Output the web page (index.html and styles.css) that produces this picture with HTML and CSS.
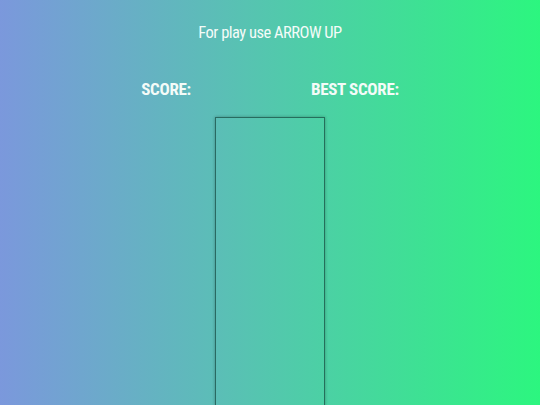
FILE: index.html
```html
<!DOCTYPE html>
<html lang="en">
<head>
  <meta charset="utf-8">
  <title>Jump</title>
  <meta name="viewport" content="width=device-width, initial-scale=1">
  <link rel="stylesheet" href="styles.css">
</head>
<body>
  <p class="hint">For play use ARROW UP</p>
  <div class="scores">
    <div class="score">SCORE: <span id="score"></span></div>
    <div class="score">BEST SCORE: <span id="best"></span></div>
  </div>
  <div class="game"></div>
</body>
</html>
```

FILE: styles.css
```css
body {
  margin: 0;
  height: 405px;
  overflow: hidden;
  font-family: "Liberation Sans Narrow", "Roboto Condensed", "Liberation Sans", sans-serif;
  color: #f4fbf8;
  background: linear-gradient(to right, #7b98dc, #2cf67f);
  display: flex;
  flex-direction: column;
  align-items: center;
}
.hint {
  margin: 24px 0 0;
  font-size: 16.5px;
  letter-spacing: -0.5px;
  line-height: 18px;
}
.scores {
  display: flex;
  gap: 120px;
  margin-top: 38px;
}
.score {
  font-size: 17px;
  font-weight: bold;
  letter-spacing: -0.3px;
  line-height: 18px;
}
.game {
  margin-top: 19px;
  width: 108px;
  height: 288px;
  flex-shrink: 0;
  border: 1px solid rgba(20, 70, 60, 0.7);
  border-bottom: 0;
  box-shadow: 0 0 3px rgba(0, 0, 0, 0.3);
}
```
